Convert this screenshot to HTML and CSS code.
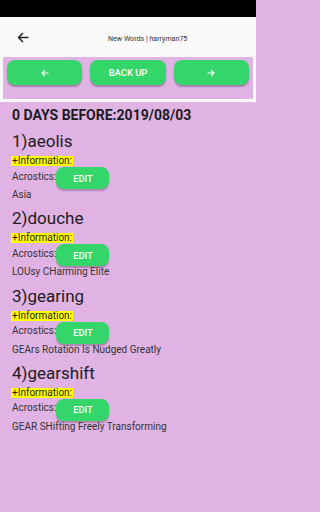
FILE: index.html
```html
<!DOCTYPE html>
<html>
<head>
<meta charset="utf-8">
<link rel="stylesheet" href="styles.css">
</head>
<body>
<div class="status"></div>
<div class="appbar">
  <svg class="back" width="12" height="11" viewBox="0 0 12 11"><path d="M11.5 5.5H1.5M6 1L1.5 5.5L6 10" fill="none" stroke="#222" stroke-width="1.5"/></svg>
  <div class="title">New Words | harryman75</div>
</div>
<div class="toolbar">
  <div class="strip">
    <div class="btn"><svg width="8" height="8" viewBox="0 0 8 8"><path d="M7.5 4H1M4 1L1 4L4 7" fill="none" stroke="#fff" stroke-width="1.1"/></svg></div>
    <div class="btn">BACK UP</div>
    <div class="btn"><svg width="8" height="8" viewBox="0 0 8 8"><path d="M0.5 4H7M4 1L7 4L4 7" fill="none" stroke="#fff" stroke-width="1.1"/></svg></div>
  </div>
</div>
<div class="content">
  <div class="heading">0 DAYS BEFORE:2019/08/03</div>
  <div class="word">
    <div class="wtitle">1)aeolis</div>
    <div class="info">+Information:</div>
    <div class="row"><span class="lbl">Acrostics:</span><div class="edit">EDIT</div></div>
    <div class="acro">Asia</div>
  </div>
  <div class="word">
    <div class="wtitle">2)douche</div>
    <div class="info">+Information:</div>
    <div class="row"><span class="lbl">Acrostics:</span><div class="edit">EDIT</div></div>
    <div class="acro">LOUsy CHarming Elite</div>
  </div>
  <div class="word">
    <div class="wtitle">3)gearing</div>
    <div class="info">+Information:</div>
    <div class="row"><span class="lbl">Acrostics:</span><div class="edit">EDIT</div></div>
    <div class="acro">GEArs Rotation Is Nudged Greatly</div>
  </div>
  <div class="word">
    <div class="wtitle">4)gearshift</div>
    <div class="info">+Information:</div>
    <div class="row"><span class="lbl">Acrostics:</span><div class="edit">EDIT</div></div>
    <div class="acro">GEAR SHifting Freely Transforming</div>
  </div>
</div>
</body>
</html>
```
FILE: styles.css
```css
* { box-sizing: border-box; }
html, body { margin: 0; padding: 0; }
body {
  width: 256px;
  height: 512px;
  overflow: hidden;
  font-family: Roboto, "Liberation Sans", sans-serif;
  background: #e1b3e5;
  color: #1c1c1c;
}
.status { height: 17px; background: #000; }
.appbar {
  height: 40px;
  background: #fafafa;
  display: flex;
  align-items: center;
}
.back { margin-left: 17px; margin-top: 1px; }
.title {
  margin-left: 79px;
  font-size: 7.1px;
  color: #333;
  margin-top: 3px;
}
.toolbar { background: #fafafa; padding: 0 3px 3px; }
.strip {
  background: #e1b3e5;
  height: 42px;
  padding: 3px 4px 0;
  display: grid;
  grid-template-columns: 1fr 1fr 1fr;
  column-gap: 8px;
  align-items: start;
}
.btn {
  height: 25px;
  background: #34d66a;
  border-radius: 8px;
  box-shadow: 0 1.5px 1.5px rgba(0,0,0,0.28);
  color: #fff;
  font-size: 9.4px;
  font-weight: 500;
  display: flex;
  align-items: center;
  justify-content: center;
}
.content { padding: 4.7px 12px 0; }
.heading {
  font-size: 14px;
  line-height: 17px;
  font-weight: 700;
  margin-bottom: 7.5px;
}
.word { margin-bottom: 7.2px; }
.wtitle { font-size: 17px; line-height: 20px; }
.info {
  margin-top: 5px;
  margin-left: -1px;
  width: fit-content;
  height: 10px;
  line-height: 10px;
  font-size: 10px;
  background: #ffff00;
  padding: 0 1px;
}
.row {
  margin-top: 1px;
  display: flex;
  align-items: flex-start;
  height: 22px;
}
.lbl {
  font-size: 10px;
  line-height: 12px;
  margin-top: 3.4px;
  color: #333;
}
.edit {
  width: 53px;
  height: 22px;
  background: #34d66a;
  border-radius: 8px;
  box-shadow: 0 1.5px 1.5px rgba(0,0,0,0.25);
  color: #fff;
  font-size: 9.2px;
  font-weight: 500;
  display: flex;
  align-items: center;
  justify-content: center;
}
.acro { font-size: 10px; line-height: 12px; color: #333; }
```
